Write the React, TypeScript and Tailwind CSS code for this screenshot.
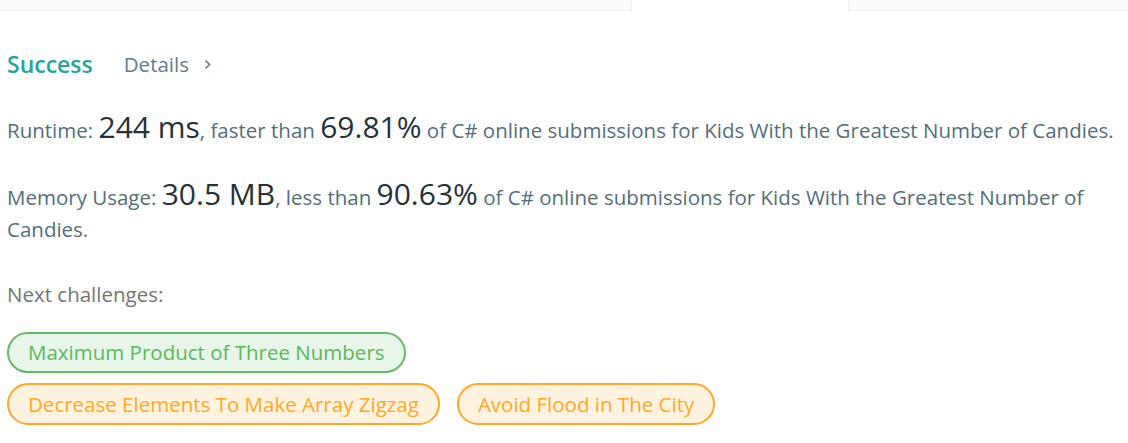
import React from 'react';

const Stat: React.FC<{ children: React.ReactNode }> = ({ children }) => (
    <span className="inline-block text-[30px] leading-[24px] text-[#263238]">{children}</span>
);

const Pill: React.FC<{ color: 'green' | 'orange'; children: React.ReactNode }> = ({ color, children }) => (
    <span
        className={
            color === 'green'
                ? 'h-[41px] flex items-center px-[19px] rounded-full border-2 border-[#66bb6a] bg-[#e8f5e9] text-[#5cb85c] text-[20.5px]'
                : 'h-[42px] flex items-center px-[19px] rounded-full border-2 border-[#ffa726] bg-[#fff3e0] text-[#ffa726] text-[20.5px]'
        }
    >
        {children}
    </span>
);

const App: React.FC = () => {
    return (
        <div className="w-[1128px] h-[443px] bg-white overflow-hidden font-['Open_Sans',sans-serif]">
            {/* tabs */}
            <div className="flex h-[11px]">
                <div className="w-[632px] bg-[#fafafa] border-b border-r border-[#eeeeee]" />
                <div className="w-[216px] bg-white" />
                <div className="flex-1 bg-[#fafafa] border-b border-l border-[#eeeeee]" />
            </div>

            <div className="pl-[7px]">
                <div className="flex items-center mt-[37px] h-[32px]">
                    <span className="text-[23px] font-semibold text-[#26a69a] leading-[32px]">Success</span>
                    <span className="ml-[31px] text-[20.5px] text-[#607d8b] leading-[32px]">Details</span>
                    <svg className="ml-[15px] mt-[1px]" width="7" height="11" viewBox="0 0 7 11">
                        <polyline points="1.5,1.5 5.5,5.5 1.5,9.5" fill="none" stroke="#607d8b" strokeWidth="1.6" />
                    </svg>
                </div>

                <p className="mt-[34px] w-[1118px] text-[20.5px] leading-[32px] text-[#546e7a] whitespace-nowrap">
                    Runtime: <Stat>244 ms</Stat>, faster than <Stat>69.81%</Stat> of C# online submissions for Kids With the Greatest Number of Candies.
                </p>

                <p className="mt-[35px] w-[1110px] text-[20.5px] leading-[32px] text-[#546e7a]">
                    <span>Memory Usage: </span>
                    <Stat>30.5 MB</Stat>
                    <span>, less than </span>
                    <Stat>90.63%</Stat>
                    <span> of C# online submissions for Kids With the Greatest Number of</span>
                    <br />
                    <span>Candies.</span>
                </p>

                <p className="mt-[33px] text-[20.5px] leading-[32px] text-[#757575]">Next challenges:</p>

                <div className="mt-[22px] flex flex-col items-start gap-[10px]">
                    <div className="flex">
                        <Pill color="green">Maximum Product of Three Numbers</Pill>
                    </div>
                    <div className="flex gap-[17px]">
                        <Pill color="orange">Decrease Elements To Make Array Zigzag</Pill>
                        <Pill color="orange">Avoid Flood in The City</Pill>
                    </div>
                </div>
            </div>
        </div>
    );
};

export default App;
